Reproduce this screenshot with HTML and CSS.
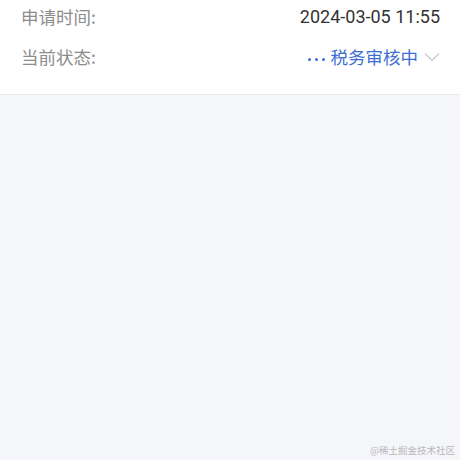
FILE: index.html
```html
<!DOCTYPE html>
<html lang="zh-CN">
<head>
<meta charset="utf-8">
<link rel="stylesheet" href="styles.css">
</head>
<body>
<div class="page">
  <div class="panel">
    <div class="row">
      <span class="label">申请时间:</span>
      <span class="value">2024-03-05 11:55</span>
    </div>
    <div class="row">
      <span class="label">当前状态:</span>
      <span class="status">
        <span class="dots"><i></i><i></i><i></i></span>
        <span class="status-text">税务审核中</span>
        <svg class="chev" width="16" height="10" viewBox="0 0 16 10"><path d="M1 1.5 L8 8.5 L15 1.5" fill="none" stroke="#c9c9c9" stroke-width="1.2"/></svg>
      </span>
    </div>
  </div>
  <div class="watermark">@稀土掘金技术社区</div>
</div>
</body>
</html>
```
FILE: styles.css
```css
html, body {
  margin: 0;
  padding: 0;
  background: #f5f6fa;
}
.page {
  width: 460px;
  height: 460px;
  position: relative;
  overflow: hidden;
  font-family: Roboto, "Noto Sans CJK SC", sans-serif;
}
.panel {
  background: #fff;
  margin-top: -4px;
  padding: 0 20px 18px 21px;
  border-bottom: 1px solid #ebebef;
}
.row {
  height: 40px;
  display: flex;
  align-items: center;
  justify-content: space-between;
}
.label {
  font-family: "Noto Sans CJK SC", sans-serif;
  font-size: 17.5px;
  color: #8c8c8c;
}
.value {
  font-size: 18px;
  color: #333;
}
.status {
  display: flex;
  align-items: center;
  color: #3c6fd0;
  font-family: "Noto Sans CJK SC", sans-serif;
  font-size: 17.5px;
}
.dots {
  display: flex;
  gap: 4px;
  margin-right: 6px;
  margin-top: 6px;
}
.dots i {
  width: 3px;
  height: 3px;
  border-radius: 50%;
  background: #3c6fd0;
}
.chev {
  margin-left: 6px;
  margin-top: 1px;
}
.watermark {
  position: absolute;
  right: 5px;
  bottom: 3px;
  font-family: "Noto Sans CJK SC", serif;
  font-size: 9.5px;
  color: #b8b8b8;
}
```
